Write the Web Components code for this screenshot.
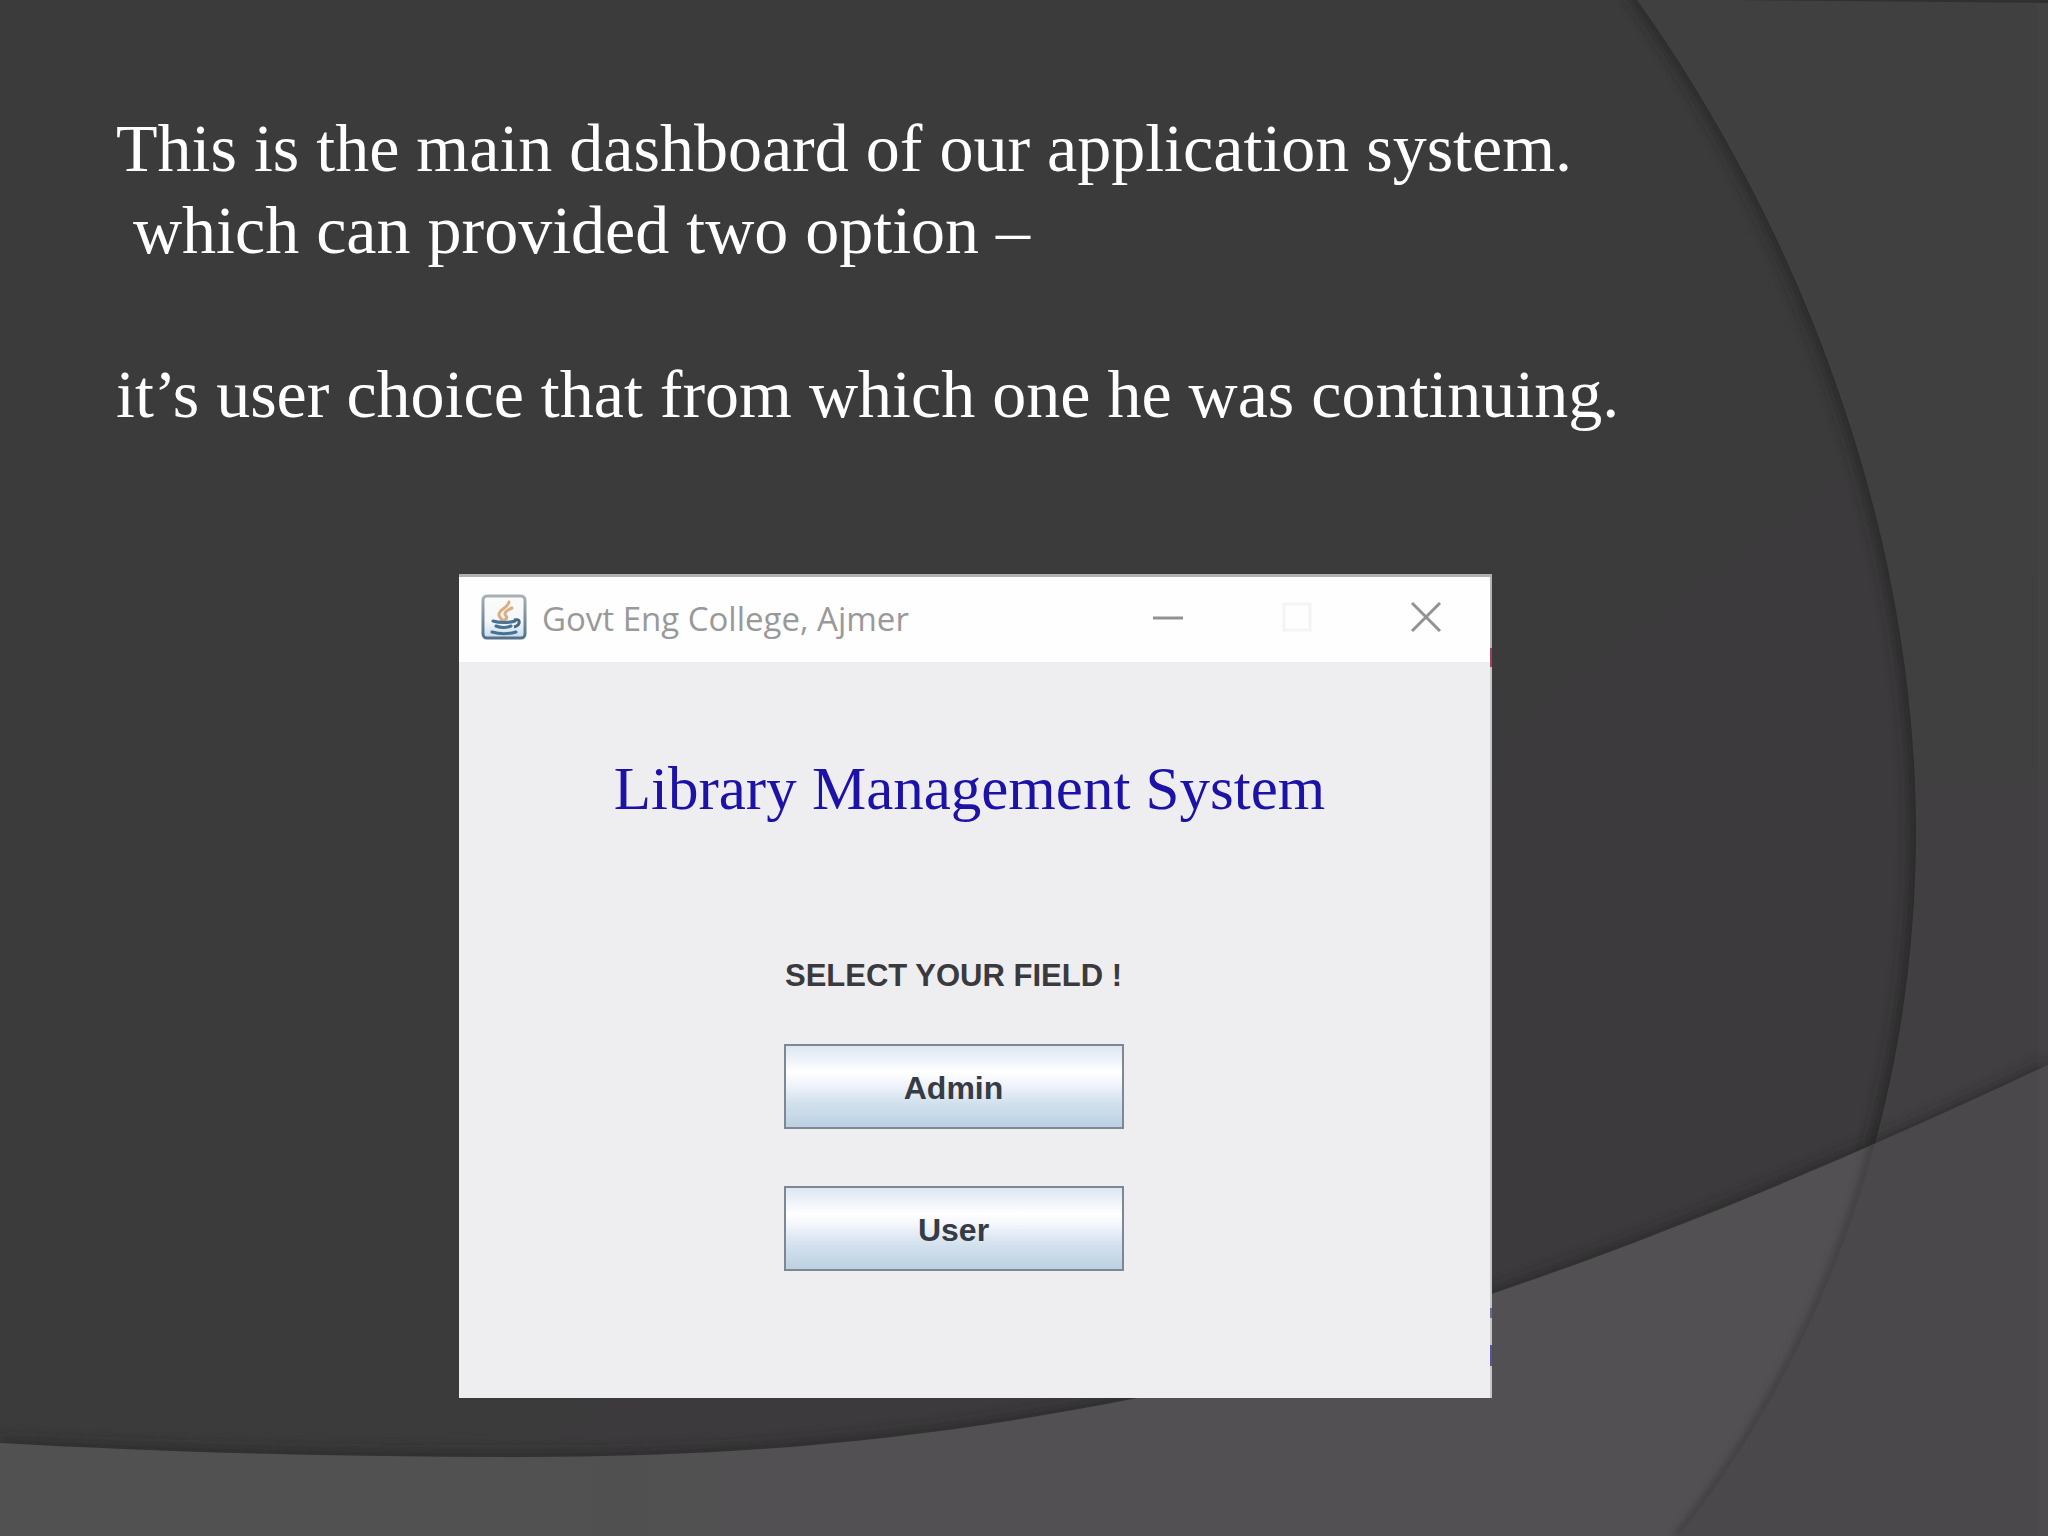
<!doctype html>
<html lang="en">
  <head>
    <meta charset="utf-8">
    <title>Library Management System</title>
    <style>
      body {
        margin: 0;
      }
    </style>
  </head>
  <body>
    <slide-page>
      <slide-text>
        <p>This is the main dashboard of our application system.
 which can provided two option –

it’s user choice that from which one he was continuing.</p>
      </slide-text>
      <app-window caption="Govt Eng College, Ajmer">
        <field-picker heading="Library Management System" prompt="SELECT YOUR FIELD !">
          <swing-button>Admin</swing-button>
          <swing-button>User</swing-button>
        </field-picker>
      </app-window>
    </slide-page>

    <template data-name="slide-page">
      <style>
        :host {
          background: #3b3b3b;
          box-sizing: border-box;
          display: grid;
          align-content: start;
          grid-template-columns: 459fr 1033fr 556fr;
          row-gap: 139px;
          min-height: 100vh;
          padding-top: 107px;
          position: relative;
        }

        svg {
          height: 100%;
          left: 0;
          position: absolute;
          top: 0;
          width: 100%;
        }

        ::slotted(*) {
          position: relative;
        }

        ::slotted(slide-text) {
          grid-column: 1 / -1;
        }

        ::slotted(app-window) {
          grid-column: 2;
        }
      </style>

      <!-- backdrop: big arc on the right, sweep along the bottom -->
      <svg viewBox="0 0 2048 1536" preserveAspectRatio="none" aria-hidden="true">
        <defs>
          <linearGradient id="base" x1="0" y1="0" x2="1" y2="1">
            <stop offset="0.45" stop-color="#3b3b3b" />
            <stop offset="0.65" stop-color="#3c3a3c" />
          </linearGradient>
          <linearGradient id="side" x1="0" y1="0" x2="0" y2="1">
            <stop offset="0.3" stop-color="#404040" />
            <stop offset="0.6" stop-color="#413f41" />
          </linearGradient>
          <linearGradient id="floor" x1="0" y1="0" x2="1" y2="0">
            <stop offset="0.2" stop-color="#515151" />
            <stop offset="0.4" stop-color="#525052" />
          </linearGradient>
          <filter id="soft" x="-20%" y="-20%" width="140%" height="140%">
            <feGaussianBlur stdDeviation="7" />
          </filter>
          <filter id="thin" x="-20%" y="-20%" width="140%" height="140%">
            <feGaussianBlur stdDeviation="3" />
          </filter>
          <path id="arc" d="M1637 0C1780 200 1915 500 1916 830C1916 1090 1835 1340 1678 1536H2100V-40H1637Z" />
          <path id="sweep" d="M0 1443C180 1453 350 1457 520 1457C740 1457 925 1440 1137 1398C1400 1335 1700 1230 2048 1065V1600H0Z" />
          <clipPath id="inSweep"><use href="#sweep" /></clipPath>
        </defs>
        <rect width="2048" height="1536" fill="url(#base)" />
        <use href="#arc" fill="#202020" opacity="0.7" filter="url(#soft)" transform="translate(-6 0)" />
        <use href="#arc" fill="url(#side)" />
        <use href="#sweep" fill="#202020" opacity="0.6" filter="url(#soft)" transform="translate(0 -4)" />
        <use href="#sweep" fill="url(#floor)" />
        <g clip-path="url(#inSweep)">
          <use href="#arc" fill="#454345" filter="url(#thin)" transform="translate(-7 0)" />
          <use href="#arc" fill="#4a484a" />
        </g>
        <path d="M1735 0H2048V3Z" fill="#303030" />
        <path d="M2038 4H2048V1536H2038Z" fill="#fff" opacity="0.02" />
      </svg>
      <slot></slot>
    </template>

    <template data-name="slide-text">
      <style>
        :host {
          color: #fff;
          display: block;
          font: 68px/82px "Liberation Serif", "Times New Roman", serif;
          padding: 0 116px;
        }

        ::slotted(p) {
          margin: 0;
          white-space: pre-wrap;
        }
      </style>

      <slot></slot>
    </template>

    <template data-name="app-window">
      <style>
        :host {
          background: linear-gradient(#b4b4b4 0 71px, #a0405c 71px 90px, #c6c6c8 90px 731px, #6c6c9c 731px 741px, #c6c6c8 741px 768px, #5a50a8 768px 789px, #c6c6c8 789px) right / 2px 100% no-repeat #eee;
          border-top: 3px solid #b0b0b0;
          box-sizing: border-box;
          display: block;
          padding-right: 2px;
        }

        header {
          background: #fefefe;
          display: flex;
          height: 85px;
          padding-left: 22px;
        }

        .icon {
          flex: none;
          height: 46px;
          margin: 17px 15px 0 0;
          width: 46px;
        }

        .caption {
          color: #999;
          flex: 1;
          font: 33px/84px "Open Sans", "Noto Sans", sans-serif;
          white-space: nowrap;
        }

        nav {
          display: flex;
        }

        button {
          align-items: center;
          background: none;
          border: 0;
          display: flex;
          height: 80px;
          justify-content: center;
          padding: 0;
          width: 129px;
        }

        button svg {
          fill: none;
          height: 30px;
          stroke: #929292;
          stroke-width: 3;
          width: 30px;
        }

        button:disabled svg {
          stroke: #f4f4f4;
        }
      </style>

      <header>
        <svg class="icon" viewBox="0 0 46 46" aria-hidden="true">
          <defs>
            <linearGradient id="tile" x1="0" y1="0" x2="0" y2="1">
              <stop offset="0" stop-color="#fbfbf8" />
              <stop offset="0.6" stop-color="#f4f8fb" />
              <stop offset="1" stop-color="#c4dcec" />
            </linearGradient>
            <linearGradient id="rim" x1="0" y1="0" x2="0" y2="1">
              <stop offset="0" stop-color="#a8b0b6" />
              <stop offset="1" stop-color="#56708a" />
            </linearGradient>
          </defs>
          <rect x="2" y="2" width="42" height="42" rx="4" fill="url(#tile)" stroke="url(#rim)" stroke-width="3" />
          <path d="M28 8C27 14 17 16 18 21C18 23 20 24 21 26M31 14C26 16 22 19 25 22C27 24 24 26 23 26" fill="none" stroke="#dcae80" stroke-width="3" stroke-linecap="round" />
          <path d="M12 27C18 29 28 29 34 27M15 32C20 34 25 34 30 32M11 38C18 40 28 40 35 38" fill="none" stroke="#4a7092" stroke-width="3" stroke-linecap="round" />
          <path d="M33 26C40 24 40 31 33 33" fill="none" stroke="#4a6680" stroke-width="3" />
        </svg>
        <span class="caption"></span>
        <nav>
          <button aria-label="Minimize"><svg viewBox="0 0 30 30"><path d="M0 16H30" /></svg></button>
          <button aria-label="Maximize" disabled><svg viewBox="0 0 30 30"><path d="M2 2H28V28H2Z" /></svg></button>
          <button aria-label="Close"><svg viewBox="0 0 30 30"><path d="M1 1L29 29M29 1L1 29" /></svg></button>
        </nav>
      </header>
      <slot></slot>
    </template>

    <template data-name="field-picker">
      <style>
        :host {
          background: #eeedef;
          display: flex;
          flex-direction: column;
          align-items: center;
          padding: 92px 0 127px;
        }

        h1 {
          color: #1c12a8;
          font: 61px/70px "Liberation Serif", "Times New Roman", serif;
          margin: 0 10px 134px 0;
        }

        section {
          align-items: center;
          display: flex;
          flex-direction: column;
          margin-right: 42px;
        }

        h2 {
          color: #3a3a3e;
          font: bold 31px/36px "Liberation Sans", Arial, sans-serif;
          margin: 0 0 50px;
        }

        .options {
          display: grid;
          gap: 57px;
          width: 340px;
        }
      </style>

      <h1></h1>
      <section>
        <h2></h2>
        <div class="options"><slot></slot></div>
      </section>
    </template>

    <template data-name="swing-button">
      <style>
        :host {
          display: block;
        }

        button {
          background: linear-gradient(#dde6f2, #fff 32%, #f4f6fc 45%, #d3e1ee 70%, #bdd1e2);
          border: 2px solid #7d8896;
          color: #363c46;
          display: block;
          font: bold 32px/36px "Liberation Sans", Arial, sans-serif;
          height: 85px;
          padding: 2px 0 0;
          width: 100%;
        }
      </style>

      <button><slot></slot></button>
    </template>

    <script>
      class TemplateElement extends HTMLElement {
        connectedCallback() {
          if (this.shadowRoot) return
          const template = document.querySelector(`template[data-name="${this.localName}"]`)
          this.attachShadow({ mode: 'open' })
          this.shadowRoot.append(template.content.cloneNode(true))
          this.updateTemplate()
        }

        updateTemplate() {}
      }

      customElements.define('slide-page', class extends TemplateElement {})

      customElements.define('slide-text', class extends TemplateElement {})

      customElements.define('app-window', class extends TemplateElement {
        updateTemplate() {
          this.shadowRoot.querySelector('.caption').textContent = this.getAttribute('caption')
        }
      })

      customElements.define('field-picker', class extends TemplateElement {
        updateTemplate() {
          this.shadowRoot.querySelector('h1').textContent = this.getAttribute('heading')
          this.shadowRoot.querySelector('h2').textContent = this.getAttribute('prompt')
        }
      })

      customElements.define('swing-button', class extends TemplateElement {})
    </script>
  </body>
</html>
